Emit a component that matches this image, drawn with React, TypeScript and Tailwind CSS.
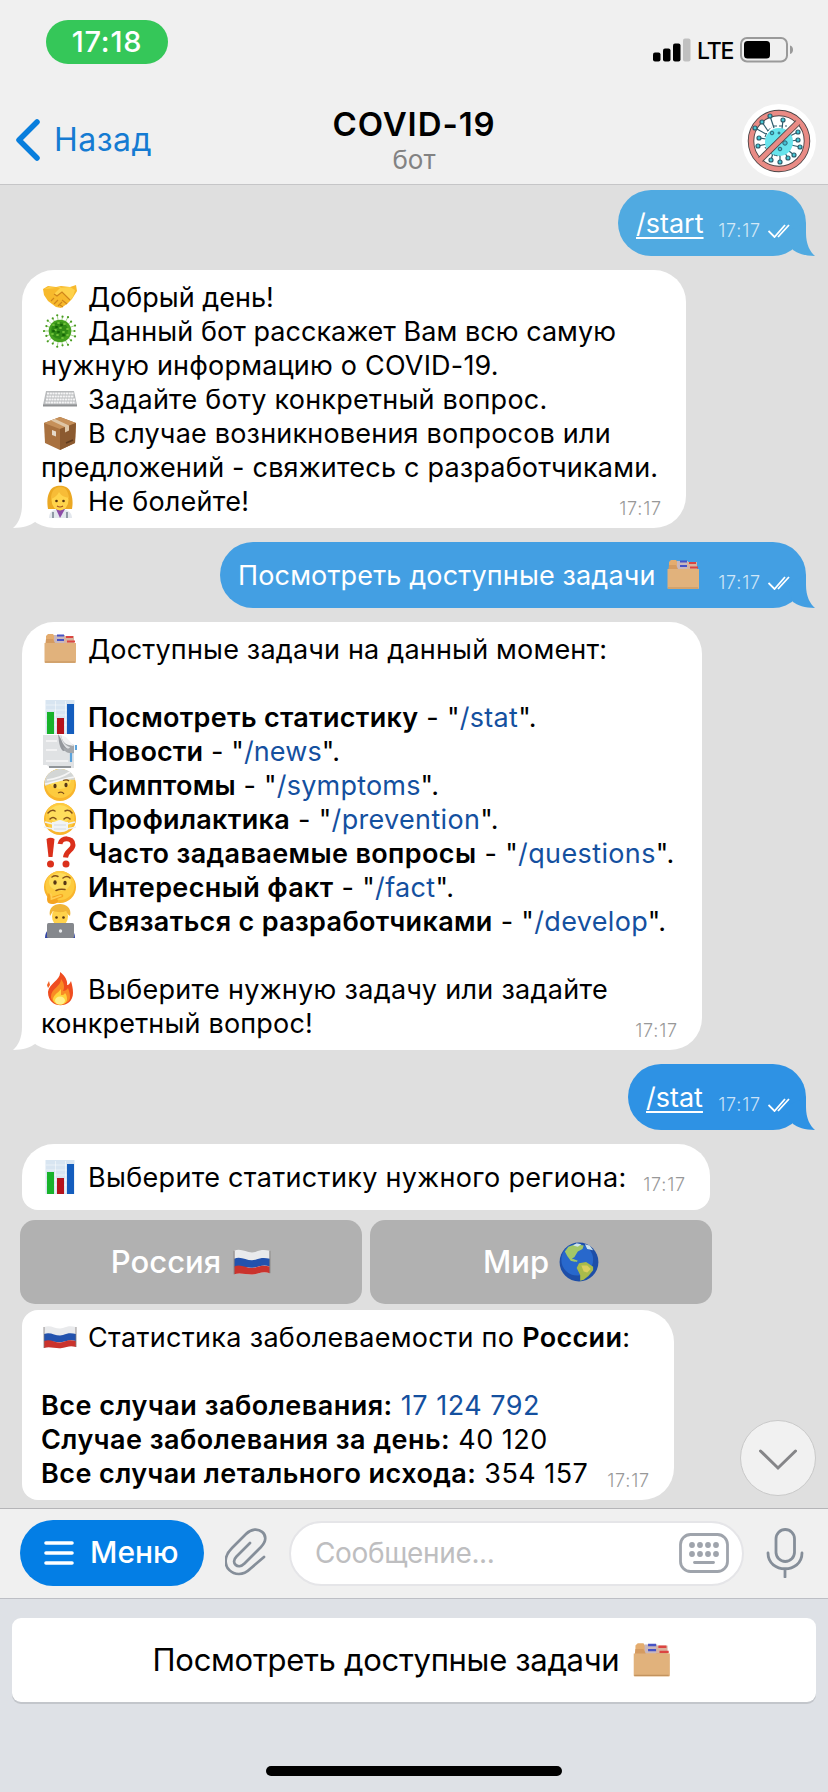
import type { ReactNode } from "react";

type EmojiName =
  | "handshake" | "microbe" | "keyboard" | "package" | "doctor" | "folder" | "chart" | "news"
  | "bandage" | "mask" | "interrobang" | "thinking" | "developer" | "fire" | "russia" | "globe";

const virusSpikes = Array.from({ length: 18 }, (_, i) => {
  const a = (i * Math.PI * 2) / 18;
  const r = i % 2 ? 16 : 14.5;
  return { x: 17 + Math.cos(a) * r, y: 17 + Math.sin(a) * r };
});

function Face() {
  return (
    <>
      <circle cx="17" cy="17" r="16" fill="#f9b52c" />
      <circle cx="17" cy="15.500" r="14.500" fill="#fdcb3f" />
      <ellipse cx="17" cy="12" rx="11" ry="9" fill="#fedd5c" />
    </>
  );
}

const emojiArt: Record<EmojiName, ReactNode> = {
  handshake: (
    <>
      <path d="M0 9 5 6l8 1 5-1 9 1 6-2 1 6-5 8-5 5-6 4-5-1-8-6-4-6z" fill="#f7b92c" />
      <path d="M1 9 6 7l7 1 5-1-7 7 3 1 5-3 8 8 3-3 2-7-5-3z" fill="#fed24b" />
      <path d="m11 14 3 2 5-4 8 8M8 21l3-3M11 24l4-4M15 26l4-4M20 27l-3-2M24 24l-5-4" stroke="#cf861c" strokeWidth="1.1" fill="none" />
    </>
  ),
  microbe: (
    <>
      {virusSpikes.map((p, i) => (
        <g key={i}>
          <path d={`M17 17L${p.x} ${p.y}`} stroke="#7fc35a" strokeWidth=".7" />
          <circle cx={p.x} cy={p.y} r="1.1" fill="#499c20" />
        </g>
      ))}
      <circle cx="17" cy="17" r="11.3" fill="#45a11f" />
      <circle cx="16.500" cy="16.500" r="8.500" fill="#2f8a15" />
      <path d="M10 11h1M15 9h1M21 10h1M24 15h1M12 16h1M17 14h1M20 18h1M14 21h1M9 20h1M19 24h1M24 21h1" stroke="#6fc038" strokeWidth="1.800" strokeLinecap="round" />
      <path d="M13 13h1M18 11h1M15 18h1M20 21h1M10 17h1" stroke="#176407" strokeWidth="2" strokeLinecap="round" />
    </>
  ),
  keyboard: (
    <>
      <path d="M3 9h28l3 14H0z" fill="#b9bbbd" />
      <path d="M0 22.500h34v2H0z" fill="#909294" />
      <path d="M4 11.500h27M3.500 14.500h27.500M3 17.500h29M2.500 20.500h30" stroke="#f5f5f6" strokeWidth="2" strokeDasharray="2.2 .5" />
    </>
  ),
  package: (
    <>
      <path d="m1 7 16-6 16 6-1 20-15 7L2 27z" fill="#a9713f" />
      <path d="m1 7 16-6 16 6-16 6z" fill="#c6905a" />
      <path d="m17 13 16-6-1 20-15 7z" fill="#8b5a30" />
      <path d="m8 4.500 4-1.500 14 6.500v5l-4 2V11z" fill="#dfc6a6" />
      <path d="m9 14 4 1.500v5L9 19z" fill="#e5d9ca" />
      <path d="m23 27 7-3" stroke="#5e391b" strokeWidth="1.500" />
    </>
  ),
  doctor: (
    <>
      <path d="M7 7C10 0 24 0 27 7c3 6 3 13 2 18H5C4 18 4 12 7 7z" fill="#eba823" />
      <path d="M6 34c0-6 4-9 11-9s12 3 12 9z" fill="#e3e7ed" />
      <path d="m13 25 4 9 5-9z" fill="#8d4ba7" />
      <ellipse cx="17" cy="16" rx="8.500" ry="10.500" fill="#ffd44c" />
      <path d="M8 15c3-1 7-4 8-7 2 4 6 5 10 6-1-8-4-11-9-11S8 7 8 15z" fill="#f7bc37" />
      <circle cx="13.500" cy="17" r="1.300" fill="#583511" />
      <circle cx="20.500" cy="17" r="1.300" fill="#583511" />
      <path d="M14 22q3 2 6 0" stroke="#a34e20" strokeWidth="1.2" fill="none" />
      <path d="M10 28v6M24 28v6" stroke="#657180" strokeWidth="1.300" />
    </>
  ),
  folder: (
    <>
      <path d="M3 8V4l2-2h5l2 3v6H3z" fill="#e4ac6e" />
      <path d="M11 3h11v8H11z" fill="#c8b7bd" />
      <path d="M21 4h10v8H21z" fill="#d8b39f" />
      <path d="M14 3.500h7M14 8h7" stroke="#4652c5" strokeWidth="2" />
      <path d="M23 5h7M24 9.500h8" stroke="#dc4441" strokeWidth="2" />
      <path d="M3 7h7l2 4h20v4H2z" fill="#d59b60" />
      <path d="M14 8h7M24 9.500h8" stroke="#6b5fb0" strokeWidth="0" />
      <path d="M1.500 11H33v19a1 1 0 0 1-1 1H2.500a1 1 0 0 1-1-1z" fill="#e1b27c" />
      <path d="M2 30h30" stroke="#c3935e" strokeWidth="1" />
    </>
  ),
  chart: (
    <>
      <path d="M2.500 0h29v34h-29z" fill="#d8e5f1" />
      <path d="M3 5h28M3 10h28M3 15h28M3 20h28M3 25h28M12.500 1v32M22.500 1v32" stroke="#fff" strokeWidth=".5" />
      <path d="M4 12h7v22H4z" fill="#18b32b" />
      <path d="M14 18h7v16h-7z" fill="#b5121b" />
      <path d="M24 4h7v30h-7z" fill="#145dbd" />
    </>
  ),
  news: (
    <>
      <path d="M0 1h18l11 12 2 3v18H7l-3-3H0z" fill="#e0e2e4" />
      <path d="m15 0 3 5c2 6 5 9 8 11l-6 1c-4-4-4-10-5-17z" fill="#94979c" />
      <path d="M18 1c4 5 6 8 8 8l5 2v8c-7 1-10-2-11-6 4 2 6 2 7 0-5-1-8-6-9-12z" fill="#a4a7ab" />
      <path d="m18 1 5 2 8 9-5-1c-5-1-7-5-8-10z" fill="#f3f3f4" />
      <path d="M3 7h11M3 16h11M3 27h22" stroke="#f7f7f7" strokeWidth="1.500" />
      <path d="M28 19v9M33 11v5" stroke="#5ba3dc" strokeWidth="2.200" />
      <path d="M6 33h22" stroke="#777b81" strokeWidth="1.500" />
    </>
  ),
  bandage: (
    <>
      <Face />
      <path d="M2 18C0 8 8 1 18 1c8 0 13 5 14 11-11-1-21 2-30 6z" fill="#d3d6d5" />
      <path d="M4 12c8-1 17-4 23-8M2 16c11-2 21-6 29-7" stroke="#f5f5f5" strokeWidth="1.700" fill="none" />
      <ellipse cx="12" cy="18" rx="1.600" ry="2.200" fill="#573716" />
      <ellipse cx="23" cy="17" rx="1.600" ry="2.200" fill="#573716" />
      <path d="M15 25q4-2 6 1M20 12.500q4-1.500 6 .5" stroke="#80501a" strokeWidth="1.300" fill="none" />
    </>
  ),
  mask: (
    <>
      <Face />
      <path d="M5 11q4-4 7-2M22 9q4-2 7 2M7 17q3-3 6 0M21 17q3-3 6 0" stroke="#82511a" strokeWidth="1.500" fill="none" strokeLinecap="round" />
      <path d="m2 20 8 2M1 25l9 2M32 20l-8 2M33 25l-9 2" stroke="#edf0f2" strokeWidth="1.500" />
      <path d="M9 20c4 0 6-2 8-2s4 2 8 2v8c-5 3-11 3-16 0z" fill="#f1f4f6" />
      <path d="M11 23h12M11 27h12" stroke="#d1d7dc" strokeWidth=".8" />
    </>
  ),
  interrobang: (
    <>
      <path d="M3.500 3q4-2.500 8 0L9.500 21h-4z" fill="#db301b" />
      <circle cx="7.500" cy="28" r="3.500" fill="#db301b" />
      <path d="M17 8c1-7 13-7 13 1 0 5-7 6-7.500 12.500" stroke="#db301b" strokeWidth="5" fill="none" />
      <circle cx="23" cy="28" r="3.500" fill="#db301b" />
    </>
  ),
  thinking: (
    <>
      <Face />
      <path d="M9 7q3-2 6-.5M20 8q4-3 7 0M13 20.500q4-2 9-1" stroke="#845018" strokeWidth="1.500" fill="none" strokeLinecap="round" />
      <ellipse cx="12" cy="12.500" rx="1.700" ry="2.300" fill="#573716" />
      <ellipse cx="22" cy="13" rx="1.700" ry="2.300" fill="#573716" />
      <path d="M5 24q3-3 3 3l10-3q3 0 2 3l-6 2c3 3-1 5-5 5-5 0-6-4-4-10z" fill="#f5a420" />
      <path d="M6.500 24q2-1 2 5l10-3.500" stroke="#ffcf55" strokeWidth="1.800" fill="none" />
    </>
  ),
  developer: (
    <>
      <path d="M2 34c0-8 5-11 15-11s15 3 15 11z" fill="#3346a5" />
      <ellipse cx="17" cy="12.500" rx="8" ry="10" fill="#ffd24b" />
      <path d="M7 12C5 4 11 0 17 0s12 4 10 12c-2-1-3-3-4-5-4 2-10 1-13 0z" fill="#f0b537" />
      <circle cx="13.500" cy="13.500" r="1.300" fill="#583511" />
      <circle cx="20.500" cy="13.500" r="1.300" fill="#583511" />
      <rect x="4" y="19" width="27" height="15" rx="1.500" fill="#85888d" />
      <circle cx="17.500" cy="27" r="1.700" fill="#e9ebed" />
    </>
  ),
  fire: (
    <>
      <path d="M17 0c1 8-11 11-12 20 0 18 25 17 25 1 0-5-1-8-2-12-1 2-2 4-4 4 1-5-3-10-7-13z" fill="#ef4d20" />
      <path d="M18 7c0 8-10 9-10 18 1 10 19 9 19 0 0-4-1-6-2-9-1 2-3 3-5 3 2-4 1-8-2-12z" fill="#f98b24" />
      <path d="M18 17c-4 5-8 6-8 11 2 7 14 6 14-1 0-3-1-5-2-6-1 2-2 2-4 2z" fill="#ffd23b" />
      <ellipse cx="17" cy="28.500" rx="5" ry="4" fill="#fff08a" />
      <path d="m4 13 2-4 1 4-2 3z" fill="#f36124" />
    </>
  ),
  russia: (
    <>
      <path d="M1 7c7-3 12 3 19 1 5-2 8-2 13-1v20c-6-2-9 0-14 1-6 1-12-2-18 0z" fill="#e9eaec" />
      <path d="M1 14c7-3 12 3 19 1 5-2 8-2 13-1v7c-6-2-9 0-14 1-6 1-12-2-18 0z" fill="#2352ad" />
      <path d="M1 21c7-3 12 3 19 1 5-2 8-2 13-1v6c-6-2-9 0-14 1-6 1-12-2-18 0z" fill="#ca332d" />
      <path d="M1 7v21M33 7v20" stroke="#7f7a79" strokeWidth=".8" />
    </>
  ),
  globe: (
    <>
      <circle cx="17" cy="17" r="16.500" fill="#1d4ea8" />
      <circle cx="15.500" cy="15" r="13.500" fill="#2868cc" />
      <path d="m5 8 3-4 6-2 7 1-1 3-4 2-3 5-2 1 3 3-4-1-3-4z" fill="#a3c768" />
      <path d="m11 14 5 2-1 1-3-1z" fill="#a3c768" />
      <path d="m17 18 6-1 6 4 0 3-4 5-4 3-3 1 0-5-3-6z" fill="#a9bb4a" />
      <path d="m22 2 4 1 3 4-5-1zM12 3l3-2 4 1-3 2z" fill="#cfe3ec" />
      <path d="m19 20 5 0 3 3-3 3-3-1z" fill="#dccf5e" />
    </>
  ),
};

function Emoji({ name, className = "size-[34px]" }: { name: EmojiName; className?: string }) {
  return (
    <svg viewBox="0 0 34 34" className={`shrink-0 ${className}`} aria-hidden="true">
      {emojiArt[name]}
    </svg>
  );
}

function Line({ emoji, children, className = "" }: { emoji?: EmojiName; children?: ReactNode; className?: string }) {
  return (
    <div className={`flex h-[34px] whitespace-pre ${className}`}>
      {emoji && (
        <span className="w-[47px] shrink-0 pl-[2px]">
          <Emoji name={emoji} className="-mt-px size-[34px]" />
        </span>
      )}
      <span>{children}</span>
    </div>
  );
}

function Time({ className = "" }: { className?: string }) {
  return <span className={`text-[18px] leading-[34px] font-light tracking-[0.8px] ${className}`}>17:17</span>;
}

function Tail({ color, side }: { color: string; side: "left" | "right" }) {
  return (
    <svg
      viewBox="0 0 36 40"
      className={side === "right" ? "absolute -right-[10px] bottom-0 h-10 w-9" : "absolute bottom-0 -left-[10px] h-10 w-9 -scale-x-100"}
      fill={color}
    >
      <path d="M26 7V17C26 28 30 36 35 40C25 40 17 37 13 34L6 16Z" />
    </svg>
  );
}

function Outgoing({ color, className, children }: { color: string; className: string; children: ReactNode }) {
  return (
    <div className={`relative mr-[22px] flex h-[66px] items-center self-end rounded-[33px] pt-[2px] text-white ${className}`}>
      <Tail color={color} side="right" />
      {children}
      <Time className="absolute right-[45px] bottom-[8px] text-white/75" />
      <svg viewBox="0 0 22 14" className="absolute right-[16px] bottom-[18px] h-[14px] w-[22px]" fill="none" stroke="white" strokeWidth="1.800">
        <path d="m.5 7 6 6L17 1M10 13 21 1" />
      </svg>
    </div>
  );
}

const commands: { emoji: EmojiName; title: string; command: string; track: string }[] = [
  { emoji: "chart", title: "Посмотреть статистику", command: "/stat", track: "tracking-[0.28px]" },
  { emoji: "news", title: "Новости", command: "/news", track: "tracking-[0.12px]" },
  { emoji: "bandage", title: "Симптомы", command: "/symptoms", track: "tracking-[0.2px]" },
  { emoji: "mask", title: "Профилактика", command: "/prevention", track: "tracking-[0.32px]" },
  { emoji: "interrobang", title: "Часто задаваемые вопросы", command: "/questions", track: "tracking-[0.37px]" },
  { emoji: "thinking", title: "Интересный факт", command: "/fact", track: "tracking-[0.35px]" },
  { emoji: "developer", title: "Связаться с разработчиками", command: "/develop", track: "tracking-[0.33px]" },
];

const avatarSpikes = [
  [770, 116, 774, 128], [762, 122, 768, 131], [755, 128, 766, 134], [783, 120, 782, 129],
  [759, 138, 766, 139], [758, 146, 767, 144], [798, 132, 790, 136], [798, 140, 791, 141],
  [800, 147, 791, 145], [771, 160, 773, 153], [780, 162, 780, 154], [788, 158, 785, 153], [794, 155, 789, 151],
];

function Avatar() {
  return (
    <svg viewBox="742 104 74 74" className="size-[74px]">
      <circle cx="779" cy="141" r="37" fill="#fff" />
      <circle cx="779" cy="141" r="28" fill="none" stroke="#4b4547" strokeWidth="6.500" />
      <circle cx="779" cy="141" r="28" fill="none" stroke="#e98b85" strokeWidth="4.700" />
      {avatarSpikes.map(([x, y, x2, y2], i) => (
        <g key={i} stroke="#2c5d6c" strokeWidth="1.200" fill="#45c8d5">
          <path d={`M${x} ${y}L${x2} ${y2}`} />
          <circle cx={x} cy={y} r="2" />
        </g>
      ))}
      <circle cx="779" cy="142" r="14" fill="#68e4ec" />
      <path d="M773 126h14M765 137q3-8 7-10M765 147q5 9 15 9" stroke="#2c5d6c" fill="none" strokeDasharray="4 2" />
      <g fill="#43bfd1" stroke="#2c6575" strokeWidth="1">
        <circle cx="772" cy="133" r="1.800" />
        <circle cx="785" cy="143" r="2.200" />
        <circle cx="780" cy="149" r="1.800" />
        <circle cx="779" cy="133" r="1" />
      </g>
      <path d="m760.500 159.500 37.500-37" stroke="#4b4547" strokeWidth="6.500" />
      <path d="m759.500 160.500 39.500-39" stroke="#e98b85" strokeWidth="4.700" />
    </svg>
  );
}

function Header() {
  return (
    <header className="h-[185px] border-b border-[#c5c5c7] bg-[#f0f0f0]">
      <div className="flex h-[96px] justify-between pt-5 pr-[34px] pl-[46px]">
        <div className="flex h-[44px] w-[122px] items-center justify-center rounded-full bg-[#35c759] pb-px text-[29px] font-medium tracking-[0.8px] text-white">
          17:18
        </div>
        <div className="flex h-6 items-center pt-[30px] text-black">
          <svg viewBox="0 0 38 24" className="h-6 w-[38px]">
            <rect x="0" y="14.500" width="7.500" height="9" rx="2" />
            <rect x="10" y="10.500" width="7.500" height="13" rx="2" />
            <rect x="20" y="5.500" width="7.500" height="18" rx="2" />
            <rect x="30" y=".5" width="7.500" height="23" rx="2" fill="#c0c0c0" />
          </svg>
          <span className="w-[49px] pt-[3px] pl-[6px] text-[23px] font-medium tracking-[-1.2px]">LTE</span>
          <svg viewBox="0 0 54 26" className="h-[26px] w-[54px]">
            <rect x="1" y="1" width="46" height="23.500" rx="6" fill="none" stroke="#9a9a9a" strokeWidth="2" />
            <rect x="4" y="4" width="26" height="17.500" rx="3.500" />
            <path d="M50 8.500c4 1 4 7.500 0 8.500z" fill="#9a9a9a" />
          </svg>
        </div>
      </div>
      <div className="grid h-[88px] grid-cols-3 items-start">
        <div className="flex items-center pt-[20px] pl-[16px] text-[#157bd2]">
          <svg viewBox="0 0 24 42" className="h-[42px] w-6" fill="none" stroke="#087edd" strokeWidth="5.500" strokeLinecap="round" strokeLinejoin="round">
            <path d="M21 3 3 21l18 18" />
          </svg>
          <span className="pl-[14px] text-[32px] tracking-[0.5px]">Назад</span>
        </div>
        <div className="flex flex-col items-center pt-[7px]">
          <h1 className="text-[33px] leading-[42px] font-semibold tracking-[0.9px] text-black">COVID-19</h1>
          <span className="text-[26px] leading-[30px] text-[#828282]">бот</span>
        </div>
        <div className="flex justify-end pt-[8px] pr-[12px]">
          <Avatar />
        </div>
      </div>
    </header>
  );
}

function RegionButton({ label, emoji, emojiClass }: { label: string; emoji: EmojiName; emojiClass: string }) {
  return (
    <button className="flex h-[84px] w-[342px] items-center justify-center rounded-[15px] bg-[#b1b1b1] text-[31px] font-medium text-white">
      {label}
      <Emoji name={emoji} className={emojiClass} />
    </button>
  );
}

function Chat() {
  return (
    <main className="relative flex h-[1323px] flex-col items-start bg-[#dfdfdf] pt-[5px] pl-[22px] text-[27px] leading-[34px] text-black">
      <Outgoing color="#50aae1" className="w-[188px] bg-[#50aae1] pl-[18px]">
        <span className="underline decoration-2 underline-offset-[4px]">/start</span>
      </Outgoing>

      <section className="relative mt-[14px] h-[258px] w-[664px] rounded-[32px] bg-white pt-[11px] pl-[19px]">
        <Tail color="#ffffff" side="left" />
        <div className="relative">
          <Line emoji="handshake">Добрый день!</Line>
          <Line emoji="microbe" className="tracking-[0.04px]">Данный бот расскажет Вам всю самую</Line>
          <Line className="tracking-[0.2px]">нужную информацию о COVID-19.</Line>
          <Line emoji="keyboard" className="tracking-[0.24px]">Задайте боту конкретный вопрос.</Line>
          <Line emoji="package" className="tracking-[0.2px]">В случае возникновения вопросов или</Line>
          <Line className="tracking-[0.2px]">предложений - свяжитесь с разработчиками.</Line>
          <Line emoji="doctor" className="tracking-[0.25px]">Не болейте!</Line>
        </div>
        <Time className="absolute right-[24px] bottom-[2px] text-[#989898]" />
      </section>

      <Outgoing color="#439fe3" className="mt-[14px] w-[586px] bg-[#439fe3] pl-[18px]">
        <span className="tracking-[0.15px]">Посмотреть доступные задачи</span>
        <Emoji name="folder" className="mt-[-3px] ml-[10px] size-[34px]" />
      </Outgoing>

      <section className="relative mt-[14px] h-[428px] w-[680px] rounded-[32px] bg-white pt-[11px] pl-[19px]">
        <Tail color="#ffffff" side="left" />
        <div className="relative">
          <Line emoji="folder" className="tracking-[0.19px]">Доступные задачи на данный момент:</Line>
          <Line />
          {commands.map((c) => (
            <Line key={c.command} emoji={c.emoji} className={c.track}>
              <b className="font-semibold">{c.title}</b> - "<a className="text-[#14509f]">{c.command}</a>".
            </Line>
          ))}
          <Line />
          <Line emoji="fire" className="tracking-[0.3px]">Выберите нужную задачу или задайте</Line>
          <Line className="tracking-[0.18px]">конкретный вопрос!</Line>
        </div>
        <Time className="absolute right-[24px] bottom-[2px] text-[#989898]" />
      </section>

      <Outgoing color="#2e92e4" className="mt-[14px] w-[178px] bg-[#2e92e4] pl-[18px]">
        <span className="underline decoration-2 underline-offset-[4px]">/stat</span>
      </Outgoing>

      <section className="relative mt-[14px] h-[66px] w-[688px] rounded-t-[32px] rounded-b-[16px] bg-white pt-[17px] pl-[19px]">
        <Line emoji="chart" className="tracking-[0.32px]">Выберите статистику нужного региона:</Line>
        <Time className="absolute right-[24px] bottom-[8px] text-[#989898]" />
      </section>
      <div className="mt-[10px] -ml-[2px] flex gap-2">
        <RegionButton label="Россия" emoji="russia" emojiClass="ml-[12px] size-[38px]" />
        <RegionButton label="Мир" emoji="globe" emojiClass="ml-[10px] size-[40px]" />
      </div>

      <section className="relative mt-[6px] h-[190px] w-[652px] rounded-[32px] rounded-l-[16px] bg-white pt-[11px] pl-[19px]">
        <Line emoji="russia" className="tracking-[0.32px]">Статистика заболеваемости по <b className="font-semibold">России</b>:</Line>
        <Line />
        <Line className="tracking-[0.5px]"><b className="font-semibold">Все случаи заболевания:</b> <a className="text-[#14509f]">17 124 792</a></Line>
        <Line className="tracking-[0.48px]"><b className="font-semibold">Случае заболевания за день:</b> 40 120</Line>
        <Line className="tracking-[0.43px]"><b className="font-semibold">Все случаи летального исхода:</b> 354 157</Line>
        <Time className="absolute right-[24px] bottom-[2px] text-[#989898]" />
      </section>

      <button className="absolute right-[12px] bottom-[12px] flex size-[76px] items-center justify-center rounded-full border border-[#c9c9c9] bg-[#f1f1f1]">
        <svg viewBox="0 0 38 22" className="mt-1 h-[22px] w-[38px]" fill="none" stroke="#858588" strokeWidth="3" strokeLinecap="round">
          <path d="m1.500 2 17.500 17L36.500 2" />
        </svg>
      </button>
    </main>
  );
}

function InputBar() {
  return (
    <div className="flex h-[90px] border-t border-[#b5b5b8] bg-[#f0f0f0] pt-[11px] pl-5">
      <button className="flex h-[66px] w-[184px] items-center rounded-full bg-[#037ee5] pb-px pl-[24px] text-[30px] font-medium text-white">
        <svg viewBox="0 0 30 26" className="mr-[16px] h-[26px] w-[30px]" stroke="white" strokeWidth="3.600" strokeLinecap="round">
          <path d="M2 3h26M2 13h26M2 23h26" />
        </svg>
        Меню
      </button>
      <svg viewBox="0 0 42 48" className="mt-[8px] ml-[21px] h-12 w-[42px]" fill="none" stroke="#858e99" strokeWidth="2.700" strokeLinecap="round" strokeLinejoin="round">
        <path d="M25 15 11.500 28.500C5 35 13 42 19.500 35.500L36 19C48 7 32-5 21 6L7 20C-10 37 11 55 25 41L39 29" />
      </svg>
      <div className="mt-px ml-[22px] flex h-[65px] w-[455px] items-center rounded-full border-2 border-[#e5e5e8] bg-white pb-px pl-[24px] text-[28px] tracking-[-0.35px] text-[#bebec0]">
        Сообщение...
        <svg viewBox="0 0 50 40" className="mr-[13px] ml-auto h-10 w-[50px]" fill="none" stroke="#9fa4ac">
          <rect x="1.500" y="1.500" width="47" height="37" rx="10" strokeWidth="2.800" />
          <path d="M13 12h.01M21 12h.01M29 12h.01M37 12h.01M13 21h.01M21 21h.01M29 21h.01M37 21h.01" strokeWidth="5.800" strokeLinecap="round" />
          <path d="M15.500 29.500h19" strokeWidth="2.800" strokeLinecap="round" />
        </svg>
      </div>
      <svg viewBox="0 0 38 50" className="mt-[8px] ml-[22px] h-[50px] w-[38px]" fill="none" stroke="#858e99" strokeWidth="2.800" strokeLinecap="round">
        <rect x="10" y="1.500" width="18.500" height="32" rx="9.250" />
        <path d="M2 25c0 21 34 21 34 0M19 41v8" />
      </svg>
    </div>
  );
}

export default function App() {
  return (
    <div className="h-[1792px] w-[828px] overflow-hidden bg-[#dee1e6] font-['Inter','Liberation_Sans',sans-serif]">
      <Header />
      <Chat />
      <InputBar />
      <footer className="flex h-[194px] flex-col items-center border-t border-[#bdbfc5] pt-[19px]">
        <button className="flex h-[84px] w-[804px] items-center justify-center rounded-[9px] bg-white pt-px pr-1 text-[31px] tracking-[-0.3px] text-black shadow-[0_2px_0_#c3c6cb]">
          Посмотреть доступные задачи
          <Emoji name="folder" className="ml-[13px] size-[39px]" />
        </button>
        <div className="mt-[64px] h-[10px] w-[296px] rounded-full bg-black" />
      </footer>
    </div>
  );
}
